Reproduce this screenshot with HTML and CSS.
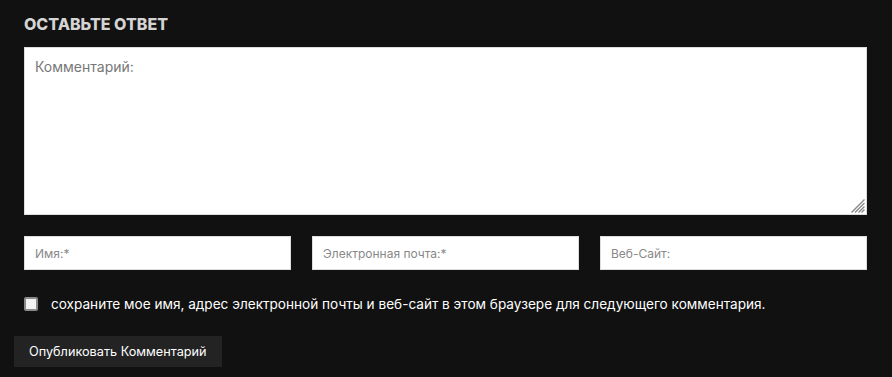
FILE: index.html
```html
<!DOCTYPE html>
<html lang="ru">
<head>
<meta charset="utf-8">
<link rel="stylesheet" href="styles.css">
</head>
<body>
<div class="respond">
  <h3 class="title">Оставьте ответ</h3>
  <form class="form">
    <div class="indent">
      <div class="comment-wrap">
        <textarea class="comment" placeholder="Комментарий:"></textarea>
        <svg class="grip" width="14" height="14" viewBox="0 0 14 14" aria-hidden="true">
          <g stroke="#8a8a8a" stroke-width="1.3" stroke-linecap="square">
            <line x1="1" y1="13" x2="13" y2="1"/>
            <line x1="4.5" y1="13" x2="13" y2="4.5"/>
            <line x1="8" y1="13" x2="13" y2="8"/>
            <line x1="11" y1="13" x2="13" y2="11"/>
          </g>
        </svg>
      </div>
      <div class="fields">
        <input class="field" type="text" placeholder="Имя:*">
        <input class="field" type="text" placeholder="Электронная почта:*">
        <input class="field" type="text" placeholder="Веб-Сайт:">
      </div>
      <label class="consent">
        <input class="check" type="checkbox">
        <span>сохраните мое имя, адрес электронной почты и веб-сайт в этом браузере для следующего комментария.</span>
      </label>
    </div>
    <button class="submit" type="button">Опубликовать Комментарий</button>
  </form>
</div>
</body>
</html>
```

FILE: styles.css
```css
* { box-sizing: border-box; }
html, body { margin: 0; padding: 0; }
body {
  background: #111111;
  font-family: "Inter", "Noto Sans", sans-serif;
  color: #fff;
  width: 892px;
  height: 377px;
  overflow: hidden;
}
.respond {
  padding: 14px 25px 0 14px;
}
.title {
  margin: 0 0 13px 10px;
  font-size: 16px;
  font-weight: 800;
  text-transform: uppercase;
  color: #d4d4d4;
  line-height: 20px;
}
.indent {
  padding-left: 10px;
}
.comment-wrap {
  position: relative;
}
.comment {
  display: block;
  width: 100%;
  height: 168px;
  border: 1px solid #ddd;
  background: #fff;
  padding: 10px 10px;
  font-family: inherit;
  font-size: 14px;
  color: #333;
  resize: none;
  outline: none;
}
.comment::placeholder { color: #777; }
.grip {
  position: absolute;
  right: 2px;
  bottom: 2px;
  display: block;
}
.fields {
  display: grid;
  grid-template-columns: repeat(3, 1fr);
  column-gap: 21px;
  margin-top: 21px;
}
.field {
  height: 34px;
  border: 1px solid #ddd;
  background: #fff;
  padding: 0 10px;
  font-family: inherit;
  font-size: 12px;
  outline: none;
}
.field::placeholder { color: #888; }
.consent {
  display: flex;
  align-items: center;
  gap: 13px;
  margin-top: 24px;
  font-size: 13.6px;
  color: #fff;
  line-height: 20px;
}
.check {
  appearance: none;
  margin: 0;
  width: 14px;
  height: 14px;
  border: 2px solid #8a8a8a;
  border-radius: 2px;
  background: #f2f2f2;
  flex: none;
}
.submit {
  margin-top: 22px;
  height: 31px;
  padding: 0 15px;
  border: none;
  background: #232323;
  color: #fff;
  font-family: inherit;
  font-size: 12.7px;
}
```
